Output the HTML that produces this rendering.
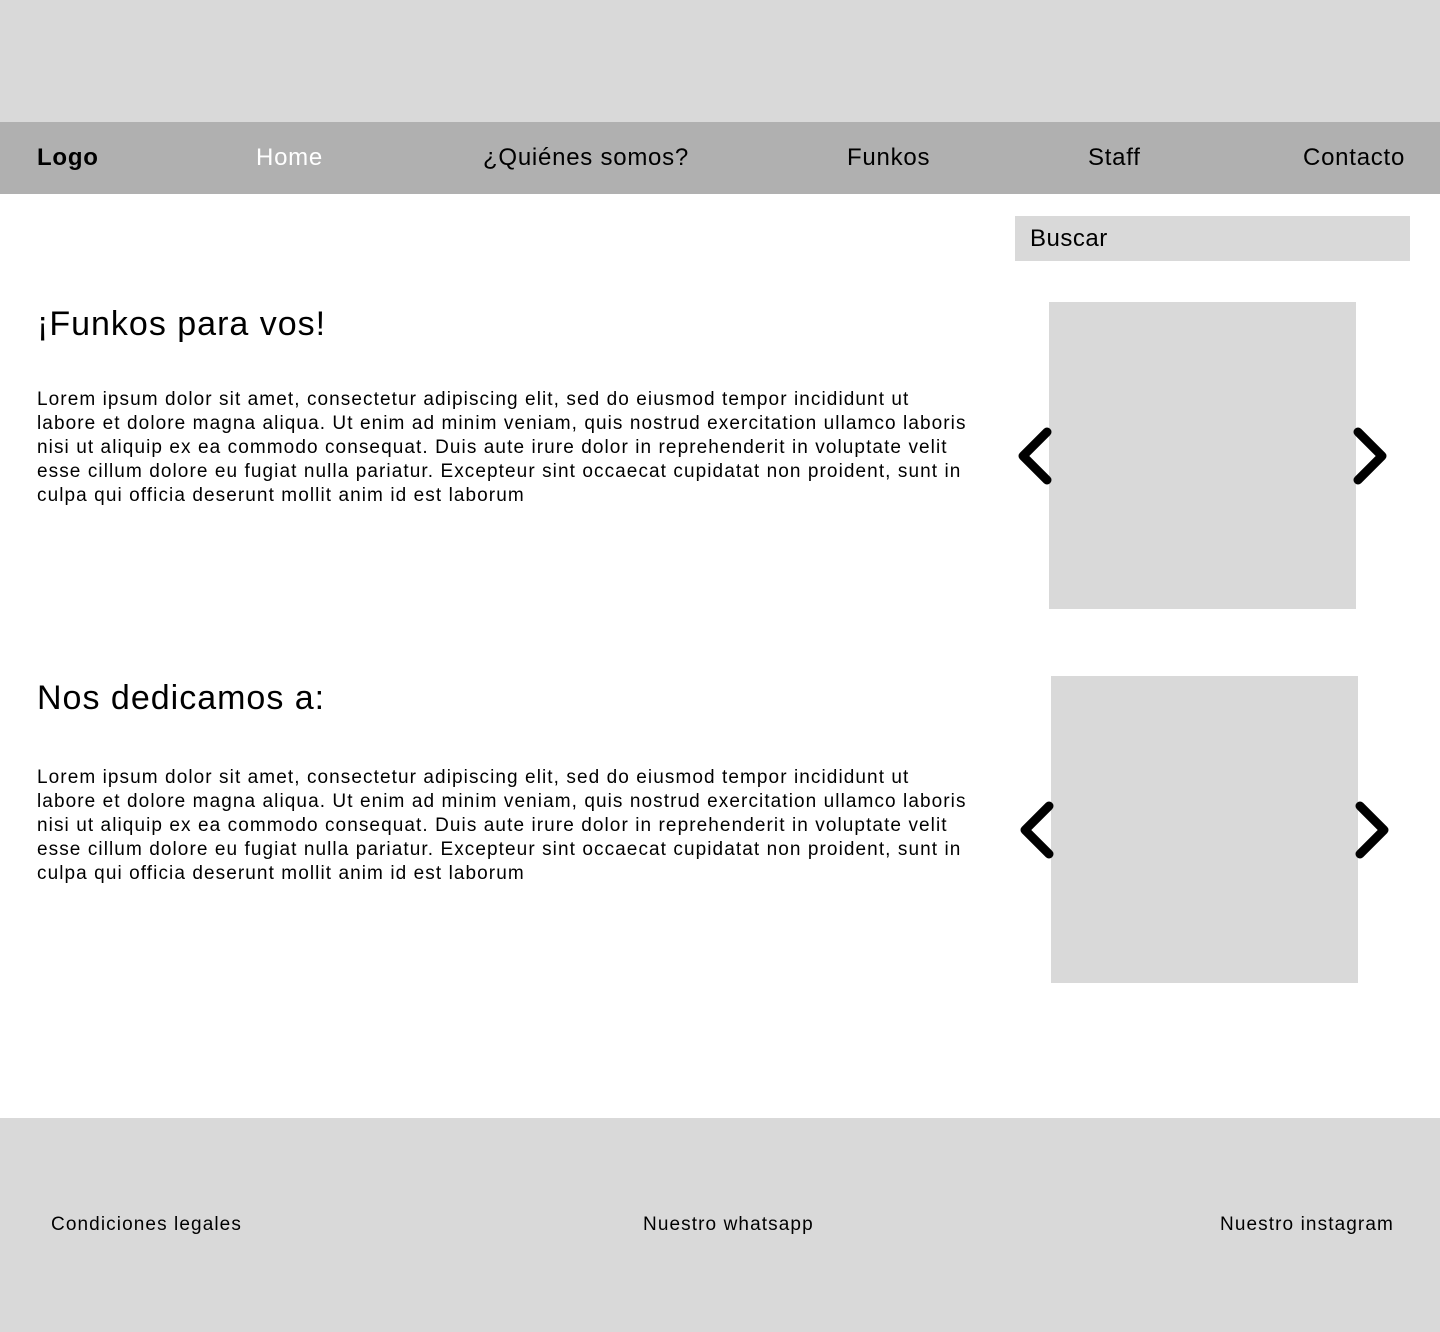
<!DOCTYPE html>
<html><head><meta charset="utf-8"><style>
*{margin:0;padding:0;box-sizing:border-box}
body{width:1440px;height:1332px;position:relative;background:#fff;font-family:"Liberation Sans",sans-serif;color:#000;overflow:hidden}
.a{position:absolute;white-space:nowrap}
.nav{font-size:24px;top:144px;letter-spacing:0.75px}
p.a{font-size:19px;line-height:24px;letter-spacing:1.08px}
h1.a{font-weight:normal;font-size:34px;letter-spacing:1px}
.f{font-size:19px;top:1214px;letter-spacing:1.1px}
</style></head><body>
<div class="a" style="left:0;top:0;width:1440px;height:122px;background:#d9d9d9"></div>
<div class="a" style="left:0;top:122px;width:1440px;height:72px;background:#b0b0b0"></div>
<div class="a nav" style="left:37px;font-weight:bold">Logo</div>
<div class="a nav" style="left:256px;color:#fff">Home</div>
<div class="a nav" style="left:483px">¿Quiénes somos?</div>
<div class="a nav" style="left:847px">Funkos</div>
<div class="a nav" style="left:1088px">Staff</div>
<div class="a nav" style="left:1303px">Contacto</div>
<div class="a" style="left:1015px;top:216px;width:395px;height:45px;background:#d9d9d9;font-size:24px;padding:9px 15px;letter-spacing:0.5px">Buscar</div>
<h1 class="a" style="left:37px;top:305px">¡Funkos para vos!</h1>
<p class="a" style="left:37px;top:388px">Lorem ipsum dolor sit amet, consectetur adipiscing elit, sed do eiusmod tempor incididunt ut<br>labore et dolore magna aliqua. Ut enim ad minim veniam, quis nostrud exercitation ullamco laboris<br>nisi ut aliquip ex ea commodo consequat. Duis aute irure dolor in reprehenderit in voluptate velit<br>esse cillum dolore eu fugiat nulla pariatur. Excepteur sint occaecat cupidatat non proident, sunt in<br>culpa qui officia deserunt mollit anim id est laborum</p>
<h1 class="a" style="left:37px;top:679px">Nos dedicamos a:</h1>
<p class="a" style="left:37px;top:766px">Lorem ipsum dolor sit amet, consectetur adipiscing elit, sed do eiusmod tempor incididunt ut<br>labore et dolore magna aliqua. Ut enim ad minim veniam, quis nostrud exercitation ullamco laboris<br>nisi ut aliquip ex ea commodo consequat. Duis aute irure dolor in reprehenderit in voluptate velit<br>esse cillum dolore eu fugiat nulla pariatur. Excepteur sint occaecat cupidatat non proident, sunt in<br>culpa qui officia deserunt mollit anim id est laborum</p>
<div class="a" style="left:1049px;top:302px;width:307px;height:307px;background:#d9d9d9"></div>
<div class="a" style="left:1051px;top:676px;width:307px;height:307px;background:#d9d9d9"></div>
<svg class="a" style="left:0;top:0" width="1440" height="1332"><g fill="none" stroke="#000" stroke-width="9" stroke-linecap="round" stroke-linejoin="round">
<path d="M1047 432 L1023 456 L1047 480"/><path d="M1358 432 L1382 456 L1358 480"/>
<path d="M1049 806 L1025 830 L1049 854"/><path d="M1360 806 L1384 830 L1360 854"/></g></svg>
<div class="a" style="left:0;top:1118px;width:1440px;height:214px;background:#d9d9d9"></div>
<div class="a f" style="left:51px">Condiciones legales</div>
<div class="a f" style="left:643px">Nuestro whatsapp</div>
<div class="a f" style="left:1220px">Nuestro instagram</div>
</body></html>
